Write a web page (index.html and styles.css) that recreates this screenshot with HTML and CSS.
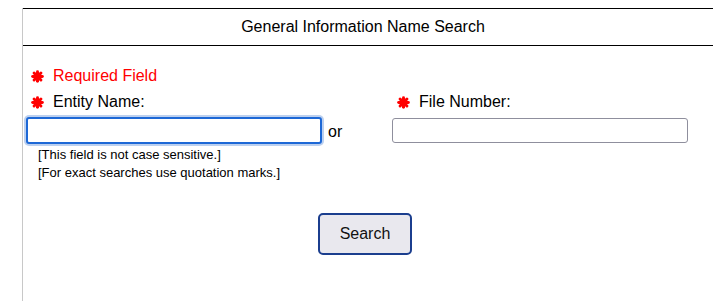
FILE: index.html
```html
<!DOCTYPE html>
<html lang="en">
<head>
  <meta charset="UTF-8" />
  <title>General Information Name Search</title>
  <link rel="stylesheet" href="styles.css">
</head>
<body>

<div class="page">

  <div class="title-bar">
    <h1>General Information Name Search</h1>
  </div>

  <form class="search-form">

    <div class="required-note">
      <svg class="req" viewBox="0 0 14 14"><g stroke="#ff0000" stroke-width="3.2" stroke-linecap="round"><line x1="7" y1="1.8" x2="7" y2="12.2"/><line x1="1.8" y1="7" x2="12.2" y2="7"/><line x1="3.3" y1="3.3" x2="10.7" y2="10.7"/><line x1="10.7" y1="3.3" x2="3.3" y2="10.7"/></g></svg>
      <span>Required Field</span>
    </div>

    <div class="fields">
      <div class="field">
        <label class="field-label" for="entityName">
          <svg class="req" viewBox="0 0 14 14"><g stroke="#ff0000" stroke-width="3.2" stroke-linecap="round"><line x1="7" y1="1.8" x2="7" y2="12.2"/><line x1="1.8" y1="7" x2="12.2" y2="7"/><line x1="3.3" y1="3.3" x2="10.7" y2="10.7"/><line x1="10.7" y1="3.3" x2="3.3" y2="10.7"/></g></svg>
          <span>Entity Name:</span>
        </label>
        <div class="input-row">
          <input type="text" id="entityName" class="text-input focused">
          <span class="or">or</span>
        </div>
        <div class="hint">[This field is not case sensitive.]</div>
        <div class="hint">[For exact searches use quotation marks.]</div>
      </div>

      <div class="field">
        <label class="field-label" for="fileNumber">
          <svg class="req" viewBox="0 0 14 14"><g stroke="#ff0000" stroke-width="3.2" stroke-linecap="round"><line x1="7" y1="1.8" x2="7" y2="12.2"/><line x1="1.8" y1="7" x2="12.2" y2="7"/><line x1="3.3" y1="3.3" x2="10.7" y2="10.7"/><line x1="10.7" y1="3.3" x2="3.3" y2="10.7"/></g></svg>
          <span>File Number:</span>
        </label>
        <div class="input-row">
          <input type="text" id="fileNumber" class="text-input">
        </div>
      </div>
    </div>

    <div class="actions">
      <button type="submit" class="search-btn">Search</button>
    </div>

  </form>

</div>

</body>
</html>
```

FILE: styles.css
```css
body {
  margin: 0;
  padding: 0;
  font-family: "Liberation Sans", Arial, sans-serif;
  font-size: 16px;
  color: #000;
  background: #fff;
}

.page {
  margin-left: 22px;
  border-left: 1px solid #c8c8c8;
  min-height: 301px;
  box-sizing: border-box;
}

.title-bar {
  margin-top: 8px;
  border-top: 1px solid #000;
  border-bottom: 1px solid #000;
  padding-right: 10px;
}

.title-bar h1 {
  margin: 0;
  font-size: 16px;
  font-weight: normal;
  line-height: 36px;
  text-align: center;
}

.search-form {
  padding-left: 3px;
}

.req {
  width: 13px;
  height: 13px;
  flex-shrink: 0;
}

.required-note {
  display: flex;
  align-items: center;
  gap: 9px;
  margin-top: 21px;
  padding-left: 5px;
  line-height: 18px;
  color: #ff0000;
}

.fields {
  display: grid;
  grid-template-columns: 366px 1fr;
  margin-top: 8px;
}

.field-label {
  display: flex;
  align-items: center;
  gap: 9px;
  padding-left: 5px;
  line-height: 18px;
}

.input-row {
  display: flex;
  align-items: center;
  margin-top: 7px;
}

.text-input {
  width: 296px;
  height: 25px;
  box-sizing: border-box;
  margin: 0;
  border: 1px solid #8f8f9d;
  border-radius: 3px;
  font-family: inherit;
  font-size: 16px;
  padding: 2px 4px;
}

.text-input.focused,
.text-input:focus {
  border: 2px solid #1d68d6;
  box-shadow: 0 0 0 2px #bcd0ef;
  outline: none;
  height: 27px;
  margin-top: -1px;
  margin-bottom: -1px;
}

.or {
  margin-left: 6px;
  line-height: 18px;
  padding-top: 2px;
}

.hint {
  font-size: 13px;
  line-height: 18px;
  padding-left: 12px;
}

.input-row + .hint {
  margin-top: 3px;
}

.actions {
  display: flex;
  justify-content: center;
  margin-top: 31px;
  padding-right: 9px;
}

.search-btn {
  width: 94px;
  height: 42px;
  background: #e9e8ee;
  border: 2px solid #1b3e8e;
  border-radius: 5px;
  font-family: inherit;
  font-size: 16px;
  color: #111;
  cursor: pointer;
}
```
